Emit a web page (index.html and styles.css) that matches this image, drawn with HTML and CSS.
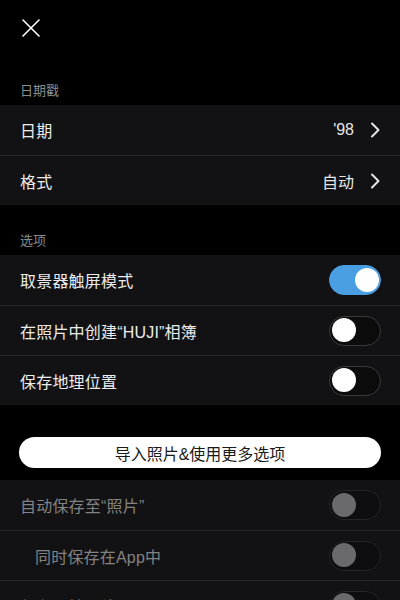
FILE: index.html
```html
<!DOCTYPE html>
<html lang="zh">
<head>
<meta charset="utf-8">
<link rel="stylesheet" href="styles.css">
</head>
<body>
<div class="screen">
  <header class="top">
    <svg class="close" width="18" height="18" viewBox="0 0 18 18">
      <path d="M1 1 L17 17 M17 1 L1 17" stroke="#fff" stroke-width="1.6" stroke-linecap="round" fill="none"/>
    </svg>
  </header>

  <div class="label first">日期戳</div>
  <section class="group">
    <div class="row">
      <span class="title">日期</span>
      <span class="value">'98</span>
      <svg class="chev" width="10" height="16" viewBox="0 0 10 16"><path d="M2 1.5 L8.5 8 L2 14.5" stroke="#e6e6e6" stroke-width="2" fill="none" stroke-linecap="round" stroke-linejoin="round"/></svg>
    </div>
    <div class="row">
      <span class="title">格式</span>
      <span class="value">自动</span>
      <svg class="chev" width="10" height="16" viewBox="0 0 10 16"><path d="M2 1.5 L8.5 8 L2 14.5" stroke="#e6e6e6" stroke-width="2" fill="none" stroke-linecap="round" stroke-linejoin="round"/></svg>
    </div>
  </section>

  <div class="label">选项</div>
  <section class="group">
    <div class="row">
      <span class="title">取景器触屏模式</span>
      <span class="toggle on"><span class="knob"></span></span>
    </div>
    <div class="row">
      <span class="title">在照片中创建“HUJI”相簿</span>
      <span class="toggle"><span class="knob"></span></span>
    </div>
    <div class="row">
      <span class="title">保存地理位置</span>
      <span class="toggle"><span class="knob"></span></span>
    </div>
  </section>

  <div class="action">
    <button class="pill">导入照片&amp;使用更多选项</button>
  </div>

  <section class="group disabled">
    <div class="row">
      <span class="title">自动保存至“照片”</span>
      <span class="toggle"><span class="knob"></span></span>
    </div>
    <div class="row sub">
      <span class="title">同时保存在App中</span>
      <span class="toggle"><span class="knob"></span></span>
    </div>
    <div class="row">
      <span class="title">保存原始照片</span>
      <span class="toggle"><span class="knob"></span></span>
    </div>
  </section>
</div>
</body>
</html>
```

FILE: styles.css
```css
html, body {
  margin: 0;
  padding: 0;
  background: #000;
}

body {
  font-family: "Liberation Sans", "Noto Sans CJK SC", sans-serif;
  color: #ececec;
  overflow: hidden;
}

.screen {
  width: 400px;
  height: 600px;
  overflow: hidden;
}

.top {
  height: 60px;
  padding-left: 22px;
  display: flex;
  align-items: flex-start;
  box-sizing: border-box;
  padding-top: 19px;
}

.close {
  display: block;
}

.label {
  height: 50px;
  box-sizing: border-box;
  display: flex;
  align-items: flex-end;
  padding: 0 20px 5px;
  font-size: 13px;
  color: #8c8c8c;
  line-height: 18px;
}

.label.first {
  height: 45px;
}

.group {
  background: #121214;
}

.row {
  height: 50px;
  box-sizing: border-box;
  display: flex;
  align-items: center;
  padding: 0 19px 0 20px;
  font-size: 16px;
}

.row + .row {
  border-top: 1px solid #252528;
}

.title {
  flex: 1;
  letter-spacing: 0.2px;
}

.value {
  margin-right: 16px;
  color: #e6e6e6;
}

.chev {
  display: block;
  margin-right: 1px;
}

.toggle {
  width: 52px;
  height: 30px;
  box-sizing: border-box;
  border-radius: 15px;
  border: 1.5px solid #3a3a3d;
  background: #0c0c0d;
  position: relative;
  flex: none;
}

.toggle .knob {
  position: absolute;
  top: 1.5px;
  left: 1.5px;
  width: 24px;
  height: 24px;
  border-radius: 50%;
  background: #fff;
}

.toggle.on {
  background: #4a9fe3;
  border-color: #4a9fe3;
}

.toggle.on .knob {
  left: auto;
  right: 1.5px;
}

.action {
  padding: 32px 19px 12px;
}

.pill {
  display: block;
  width: 100%;
  height: 31px;
  border: none;
  border-radius: 16px;
  background: #fff;
  color: #1a1a1a;
  font-family: inherit;
  font-size: 16px;
  padding: 0;
}

.disabled .title {
  color: #838383;
}

.disabled .toggle {
  border-color: #252527;
  background: #0e0e10;
}

.disabled .toggle .knob {
  background: #6a6a6c;
}

.row.sub {
  padding-left: 35px;
}
```
